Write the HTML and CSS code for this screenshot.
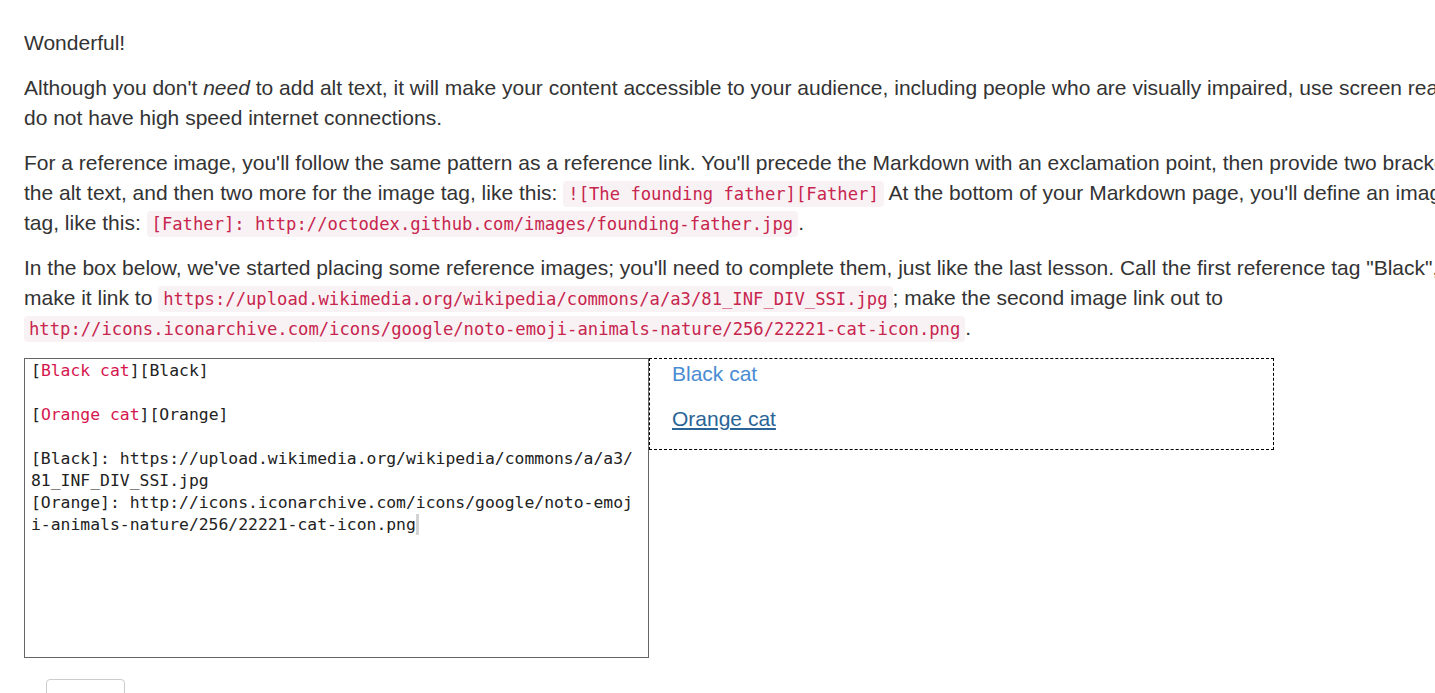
FILE: index.html
```html
<!DOCTYPE html>
<html lang="en">
<head>
<meta charset="utf-8">
<title>Reference images</title>
<link rel="stylesheet" href="styles.css">
</head>
<body>
<main class="lesson">
  <div class="prose">
    <p>Wonderful!</p>
    <p>Although you don't <em>need</em> to add alt text, it will make your content accessible to your audience, including people who are visually impaired, use screen readers, or do not have high speed internet connections.</p>
    <p>For a reference image, you'll follow the same pattern as a reference link. You'll precede the Markdown with an exclamation point, then provide two brackets for the alt text, and then two more for the image tag, like this: <code>![The founding father][Father]</code> At the bottom of your Markdown page, you'll define an image for the tag, like this: <code>[Father]: http://octodex.github.com/images/founding-father.jpg</code>.</p>
    <p>In the box below, we've started placing some reference images; you'll need to complete them, just like the last lesson. Call the first reference tag "Black", and make it link to <code>https://upload.wikimedia.org/wikipedia/commons/a/a3/81_INF_DIV_SSI.jpg</code>; make the second image link out to <code>http://icons.iconarchive.com/icons/google/noto-emoji-animals-nature/256/22221-cat-icon.png</code>.</p>
  </div>
  <div class="workspace">
    <div class="editor"><div class="line">[<span class="alt">Black cat</span>][Black]</div><div class="line">&nbsp;</div><div class="line">[<span class="alt">Orange cat</span>][Orange]</div><div class="line">&nbsp;</div><div class="line">[Black]: https://upload.wikimedia.org/wikipedia/commons/a/a3/81_INF_DIV_SSI.jpg</div><div class="line">[Orange]: http://icons.iconarchive.com/icons/google/noto-emoji-animals-nature/256/22221-cat-icon.png<span class="cursor"></span></div></div>
    <div class="preview">
      <p><a class="link" href="#">Black cat</a></p>
      <p><a class="link hover" href="#">Orange cat</a></p>
    </div>
  </div>
  <div class="actions">
    <button class="btn" type="button"></button>
  </div>
</main>
</body>
</html>
```
FILE: styles.css
```css
html, body {
  margin: 0;
  padding: 0;
  overflow: hidden;
  background: #fff;
}

body {
  font-family: "Liberation Sans", Arial, sans-serif;
  font-size: 21px;
  line-height: 30px;
  color: #333;
}

.lesson {
  padding: 28px 0 0 24px;
}

.prose {
  width: 1495px;
}

.prose p {
  margin: 0 0 15px;
}

.prose em {
  font-style: italic;
}

code {
  font-family: "DejaVu Sans Mono", "Liberation Mono", monospace;
  font-size: 17.2px;
  line-height: 20px;
  color: #c7254e;
  background: #f9f2f4;
  border-radius: 4px;
  padding: 3px 5px;
}

.workspace {
  display: flex;
  align-items: flex-start;
}

.editor {
  box-sizing: border-box;
  width: 625px;
  height: 300px;
  border: 1px solid #666;
  padding: 1px 6px;
  font-family: "DejaVu Sans Mono", "Liberation Mono", monospace;
  font-size: 16.4px;
  line-height: 22px;
  color: #222;
  word-break: break-all;
  white-space: pre-wrap;
}

.editor .alt {
  color: #d6164e;
}

.cursor {
  display: inline-block;
  width: 3px;
  height: 21px;
  background: #d4d4d4;
  vertical-align: -5px;
}

.preview {
  box-sizing: border-box;
  width: 625px;
  border: 1px dashed #000;
  padding: 0 22px;
}

.preview p {
  margin: 0 0 15px;
}

.link {
  color: #4a8cd2;
  text-decoration: none;
}

.link.hover {
  color: #2a6496;
  text-decoration: underline;
}

.actions {
  padding: 21px 0 0 22px;
}

.btn {
  width: 79px;
  height: 40px;
  border: 1px solid #ccc;
  border-radius: 4px;
  background: #fff;
}
```
